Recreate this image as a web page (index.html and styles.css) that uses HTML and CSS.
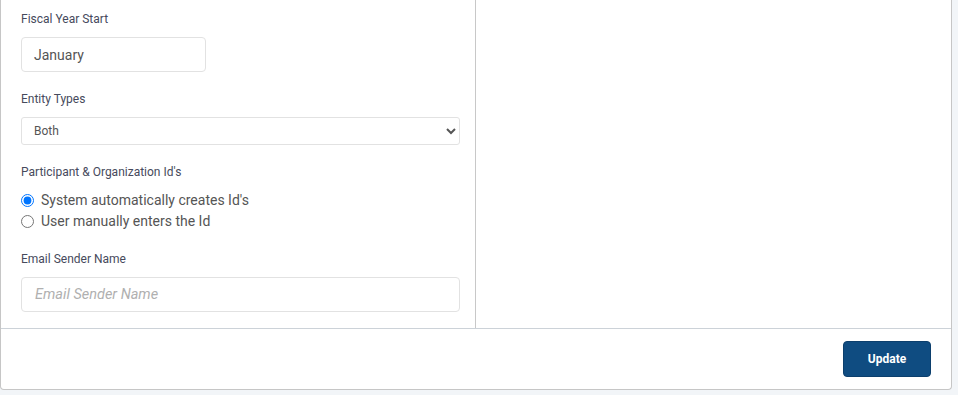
FILE: index.html
```html
<!DOCTYPE html>
<html>
<head>
<meta charset="utf-8">
<link rel="stylesheet" href="styles.css">
</head>
<body>
<div class="card">
  <div class="card-body">
    <div class="col col-left">
      <div class="group">
        <label class="label">Fiscal Year Start</label>
        <input class="input input-short" type="text" value="January">
      </div>
      <div class="group">
        <label class="label">Entity Types</label>
        <select class="select">
          <option>Both</option>
        </select>
      </div>
      <div class="group">
        <label class="label">Participant &amp; Organization Id's</label>
        <div class="radios">
          <label class="radio-row"><input type="radio" name="ids" class="radio" checked> System automatically creates Id's</label>
          <label class="radio-row"><input type="radio" name="ids" class="radio"> User manually enters the Id</label>
        </div>
      </div>
      <div class="group group-last">
        <label class="label">Email Sender Name</label>
        <input class="input input-email" type="text" placeholder="Email Sender Name">
      </div>
    </div>
    <div class="col col-right"></div>
  </div>
  <div class="card-footer">
    <button class="btn">Update</button>
  </div>
</div>
</body>
</html>
```
FILE: styles.css
```css
html, body {
  margin: 0;
  padding: 0;
}
body {
  background: #f2f5f8;
  font-family: Roboto, "Liberation Sans", Arial, sans-serif;
  height: 395px;
  overflow: hidden;
}
.card {
  width: 950px;
  background: #fff;
  border: 1px solid #c6c6c6;
  border-top: 0;
  border-radius: 0 0 4px 4px;
}
.card-body {
  display: flex;
}
.col-left {
  width: 439px;
  padding: 11px 15px 16px 20px;
  border-right: 1px solid #c8c8c8;
}
.col-right {
  flex: 1;
}
.group {
  display: flex;
  flex-direction: column;
  align-items: flex-start;
  margin-bottom: 19px;
}
.group-last {
  margin-bottom: 0;
}
.label {
  font-size: 12px;
  line-height: 16px;
  color: #464a5c;
  margin-bottom: 10px;
}
.input {
  box-sizing: border-box;
  width: 439px;
  height: 35px;
  border: 1px solid #e2e2e2;
  border-radius: 4px;
  padding: 0 12px;
  font-family: inherit;
  font-size: 14px;
  color: #555;
  background: #fff;
  outline: none;
  margin: 0;
}
.input-short {
  width: 185px;
}
.input-email {
  padding-left: 13px;
  font-size: 14.5px;
}
.input::placeholder {
  font-style: italic;
  color: #b0b0b0;
}
.select {
  box-sizing: border-box;
  width: 439px;
  height: 28px;
  border: 1px solid #e2e2e2;
  border-radius: 3px;
  padding: 0 8px;
  font-family: inherit;
  font-size: 12px;
  color: #555;
  background-color: #fff;
  margin: 0;
}
.radios {
  display: flex;
  flex-direction: column;
}
.radio-row {
  display: flex;
  align-items: center;
  font-size: 14px;
  line-height: 21px;
  color: #555;
}
.radio {
  width: 13px;
  height: 13px;
  margin: 0 7px 0 0;
}
.card-footer {
  border-top: 1px solid #ccd2d8;
  display: flex;
  justify-content: flex-end;
  padding: 12px 20px 12px 0;
}
.btn {
  width: 88px;
  height: 36px;
  background: #0f4c81;
  color: #fff;
  border: 1px solid #0c3f6d;
  border-radius: 4px;
  font-family: inherit;
  font-size: 12px;
  font-weight: 700;
  padding: 0;
}
```
